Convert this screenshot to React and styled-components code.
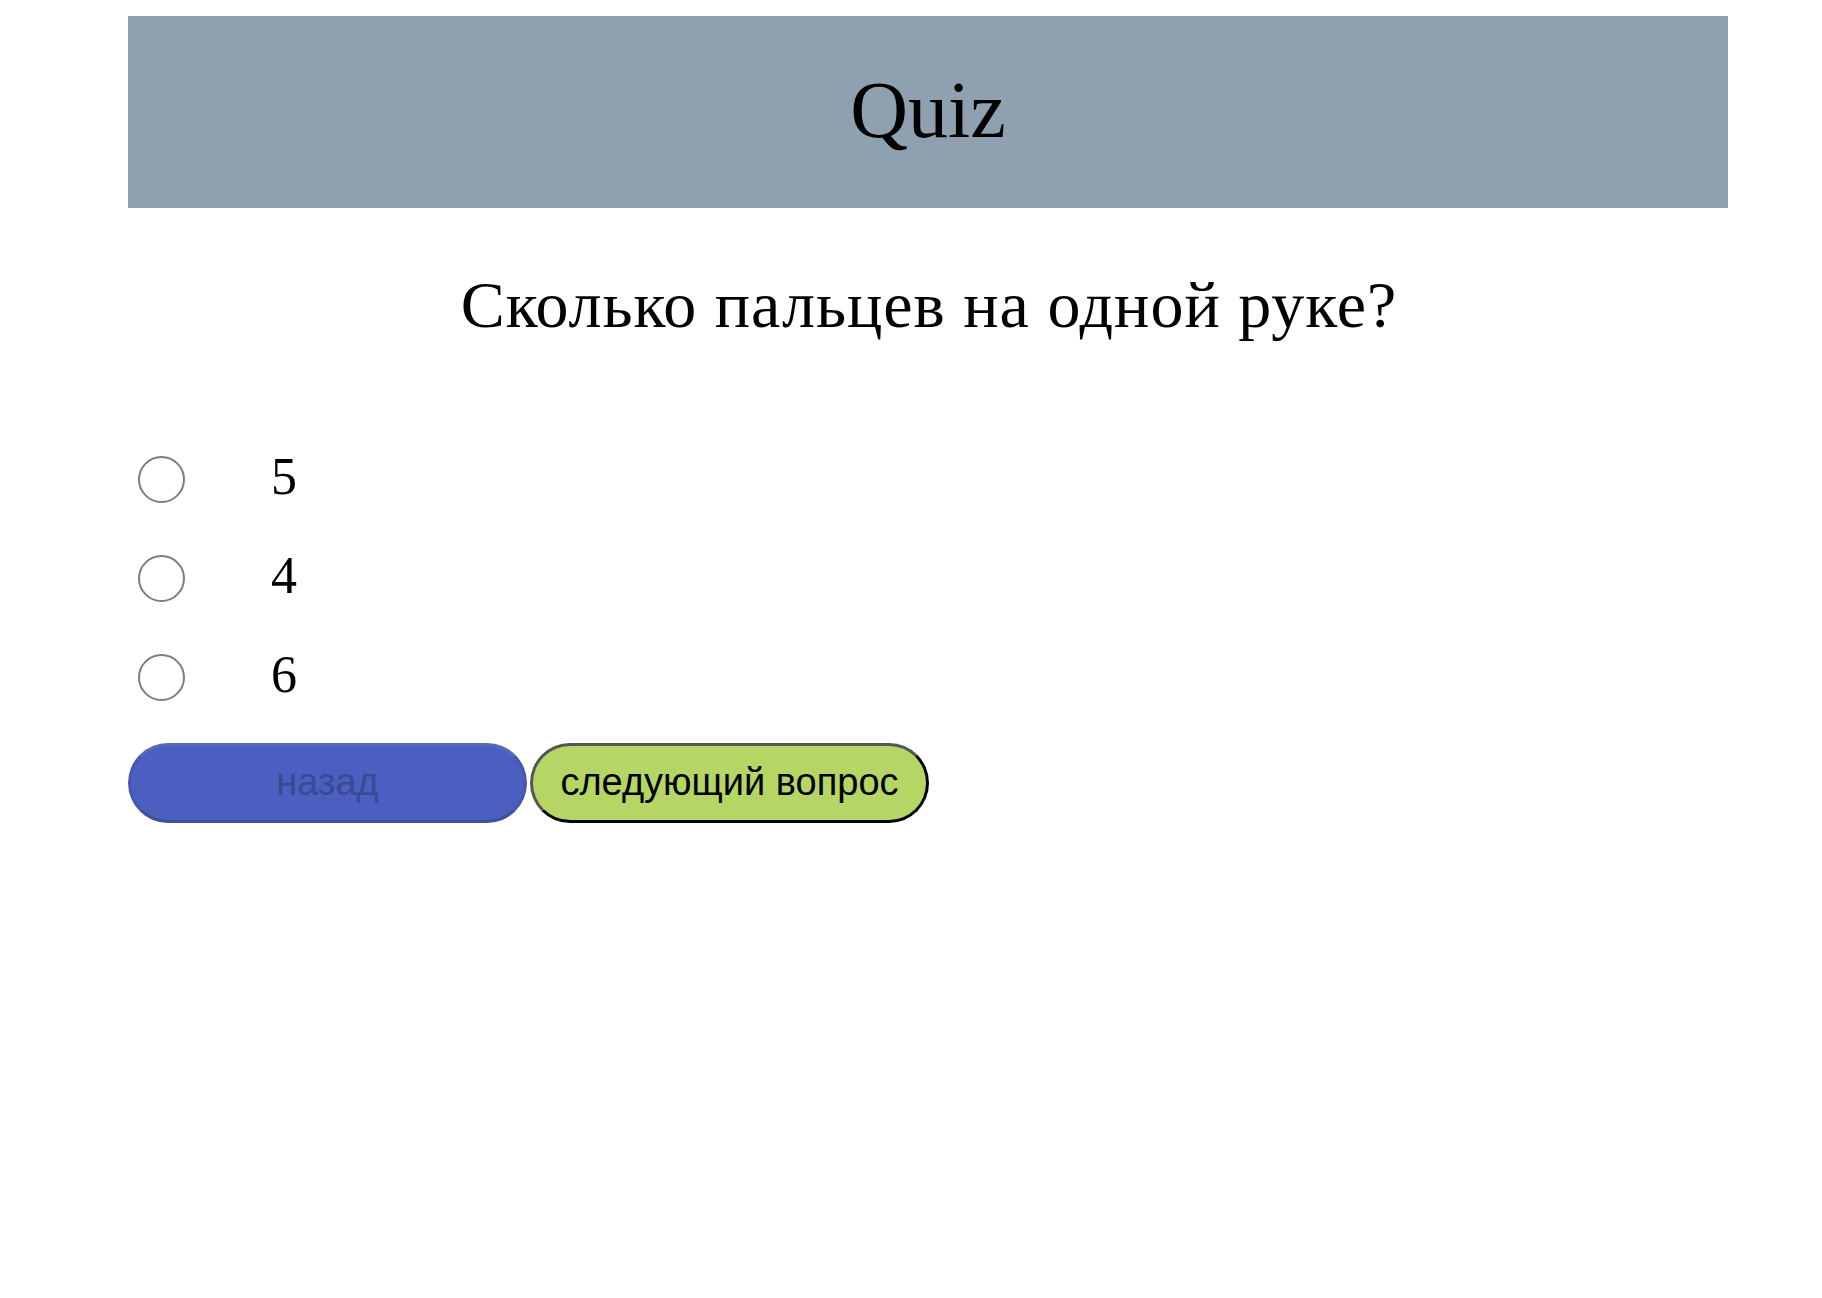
import React, { useState } from "react";
import styled, { createGlobalStyle } from "styled-components";

const GlobalStyle = createGlobalStyle`
  html, body {
    margin: 0;
    padding: 0;
    background: #ffffff;
  }
  body {
    font-family: "Liberation Serif", "Times New Roman", serif;
    color: #000;
  }
`;

const Page = styled.div`
  width: 1600px;
  margin-left: 128px;
  padding-top: 16px;
`;

const Header = styled.header`
  height: 192px;
  background: #8fa0b0;
  display: flex;
  align-items: center;
  justify-content: center;
`;

const Title = styled.h1`
  margin: 0;
  font-size: 80px;
  font-weight: 400;
  line-height: normal;
  padding-bottom: 4px;
`;

const Question = styled.h2`
  margin: 59px 0 0;
  font-size: 66px;
  font-weight: 400;
  letter-spacing: 1px;
  line-height: 76px;
  text-align: center;
  padding-left: 2px;
`;

const Options = styled.div`
  margin-top: 87px;
  display: grid;
  grid-auto-rows: 99px;
`;

const OptionRow = styled.label`
  display: flex;
  align-items: center;
  cursor: pointer;
`;

const Radio = styled.input.attrs({ type: "radio" })`
  appearance: none;
  -webkit-appearance: none;
  width: 47px;
  height: 47px;
  margin: 0 0 0 10px;
  border: 2px solid #7d7d7d;
  border-radius: 50%;
  background: #fff;
  box-sizing: border-box;
  flex: none;
  cursor: pointer;
  &:checked {
    border-color: #2f6fdb;
    box-shadow: inset 0 0 0 9px #fff;
    background: #2f6fdb;
  }
`;

const OptionText = styled.span`
  margin-left: 86px;
  font-size: 52px;
  line-height: 60px;
  margin-bottom: 6px;
`;

const Buttons = styled.div`
  margin-top: 16px;
  display: flex;
  gap: 3px;
`;

const NavButton = styled.button`
  width: 399px;
  height: 80px;
  border-radius: 40px;
  border: 3px solid;
  border-color: ${(p) => p.$border};
  background: ${(p) => p.$bg};
  color: ${(p) => p.$color};
  font-family: "Liberation Sans", Arial, sans-serif;
  font-size: 38px;
  padding: 0 0 2px;
  box-sizing: border-box;
  cursor: pointer;
  &:disabled {
    cursor: default;
  }
`;

const answers = ["5", "4", "6"];

export default function App() {
  const [selected, setSelected] = useState(null);
  return (
    <>
      <GlobalStyle />
      <Page>
        <Header>
          <Title>Quiz</Title>
        </Header>
        <Question>Сколько пальцев на одной руке?</Question>
        <Options>
          {answers.map((a) => (
            <OptionRow key={a}>
              <Radio
                name="answer"
                checked={selected === a}
                onChange={() => setSelected(a)}
              />
              <OptionText>{a}</OptionText>
            </OptionRow>
          ))}
        </Options>
        <Buttons>
          <NavButton
            disabled
            $bg="#4b5fc1"
            $border="#5a69b3 #4757ab #404f9a #4757ab"
            $color="#3a4a92"
          >
            назад
          </NavButton>
          <NavButton
            $bg="#b5d665"
            $border="#555555 #000000 #000000 #555555"
            $color="#000000"
          >
            следующий вопрос
          </NavButton>
        </Buttons>
      </Page>
    </>
  );
}
